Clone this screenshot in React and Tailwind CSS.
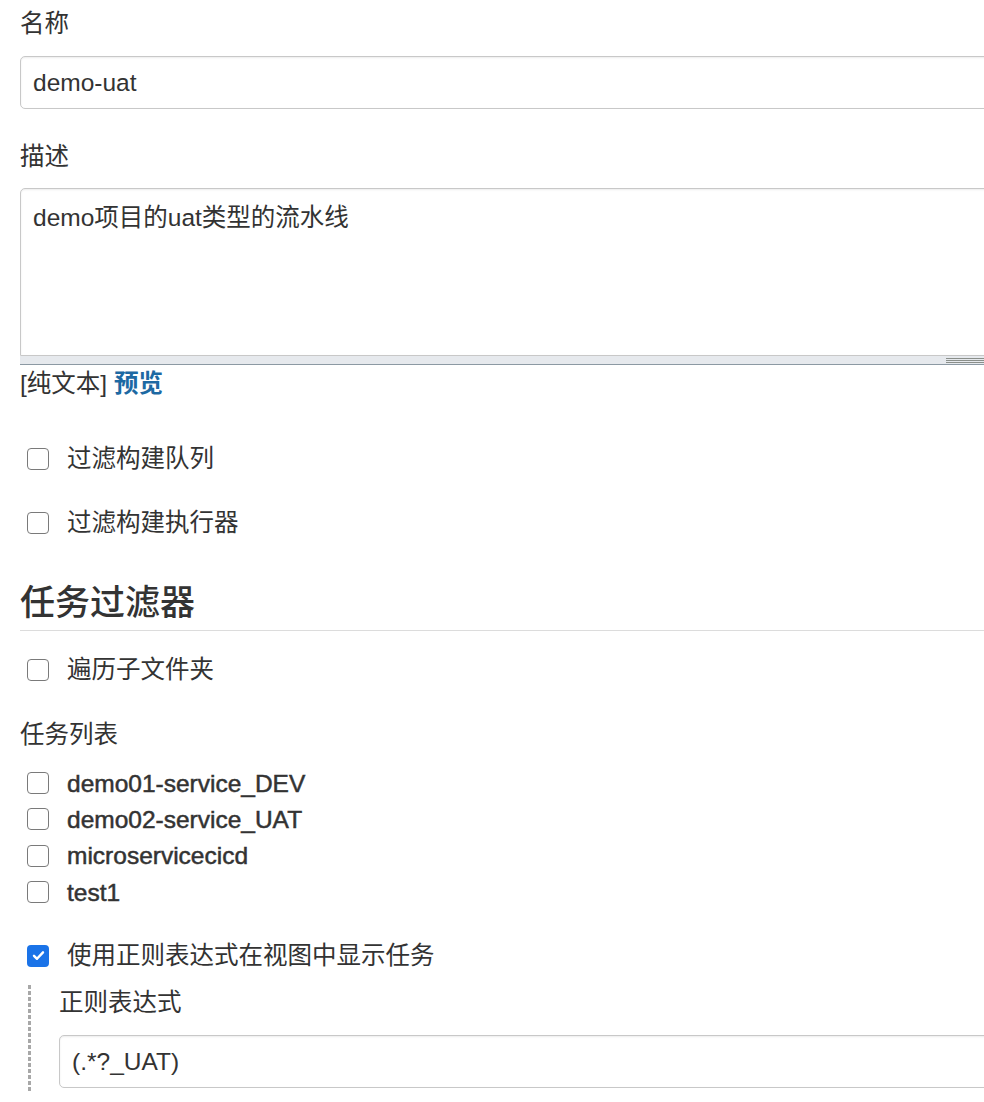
import React from "react";

const FONT = { fontFamily: '"Liberation Sans", "Noto Sans CJK SC", sans-serif' };

function Box({ checked }) {
  if (checked) {
    return (
      <span className="flex h-[22px] w-[22px] shrink-0 items-center justify-center rounded-[4px] bg-[#1a73e8]">
        <svg width="15" height="15" viewBox="0 0 16 16" fill="none">
          <path d="M3.2 8.4 6.4 11.5 12.8 4.6" stroke="#fff" strokeWidth="2.6" strokeLinecap="round" strokeLinejoin="round" />
        </svg>
      </span>
    );
  }
  return <span className="block h-[22px] w-[22px] shrink-0 rounded-[4px] border border-[#7a7a7a] bg-white" />;
}

function CheckRow({ label, checked, bold, className = "" }) {
  return (
    <div className={`flex items-center pl-[7px] ${className}`}>
      <Box checked={checked} />
      <span
        className={`ml-[18px] text-[24.5px] text-[#333] ${bold ? "[-webkit-text-stroke:0.5px_#333]" : ""}`}
      >
        {label}
      </span>
    </div>
  );
}

function TextInput({ value, className = "" }) {
  return (
    <div
      className={`flex h-[53px] items-center rounded-[5px] border border-[#c8c8c8] bg-white pl-[12px] text-[24.5px] text-[#333] shadow-[inset_0_1px_2px_rgba(0,0,0,0.08)] ${className}`}
    >
      {value}
    </div>
  );
}

export default function App() {
  const jobs = ["demo01-service_DEV", "demo02-service_UAT", "microservicecicd", "test1"];
  return (
    <div className="h-[1102px] w-[984px] overflow-hidden bg-white" style={FONT}>
      <div className="w-[1040px] pl-[20px] leading-[35px]">
        <div className="mt-[6px] text-[24.5px] text-[#333]">名称</div>
        <TextInput value="demo-uat" className="mt-[15px]" />

        <div className="mt-[30px] text-[24.5px] text-[#333]">描述</div>
        <div className="mt-[14px]">
          <div className="h-[168px] rounded-t-[5px] border border-[#c8c8c8] bg-white pl-[12px] pt-[11px] text-[24.5px] text-[#333] shadow-[inset_0_1px_2px_rgba(0,0,0,0.08)]">
            demo项目的uat类型的流水线
          </div>
          <div className="relative h-[9px] border-b border-[#8c99a3] bg-[#e6e9ed]">
            <div className="absolute left-[926px] top-[2px] flex w-[50px] flex-col gap-[1px]">
              <span className="block h-[1px] bg-[#8a8f8a]" />
              <span className="block h-[1px] bg-[#8a8f8a]" />
              <span className="block h-[1px] bg-[#8a8f8a]" />
            </div>
          </div>
        </div>
        <div className="mt-[1px] text-[24.5px] text-[#333]">
          [纯文本] <span className="font-bold text-[#1d69a3]">预览</span>
        </div>

        <CheckRow label="过滤构建队列" className="mt-[40px]" />
        <CheckRow label="过滤构建执行器" className="mt-[29px]" />

        <div className="mt-[42px] border-b border-[#dcdcdc] pb-[6px] text-[35px] font-medium leading-[42px] text-[#333]">
          任务过滤器
        </div>

        <CheckRow label="遍历子文件夹" className="mt-[21px]" />

        <div className="mt-[30px] text-[24.5px] text-[#333]">任务列表</div>
        <div className="mt-[13px] flex flex-col">
          {jobs.map((j) => (
            <CheckRow key={j} label={j} bold className="h-[36.3px]" />
          ))}
        </div>

        <CheckRow label="使用正则表达式在视图中显示任务" checked className="mt-[28px]" />

        <div className="mt-[12px] flex">
          <div className="ml-[8px] w-[3px] shrink-0 bg-[repeating-linear-gradient(to_bottom,#a8a8a8_0_4px,transparent_4px_6px)]" />
          <div className="flex-1 pb-[3px] pl-[28px]">
            <div className="text-[24.5px] text-[#333]">正则表达式</div>
            <TextInput value="(.*?_UAT)" className="mt-[15px] h-[52px]" />
          </div>
        </div>
      </div>
    </div>
  );
}
